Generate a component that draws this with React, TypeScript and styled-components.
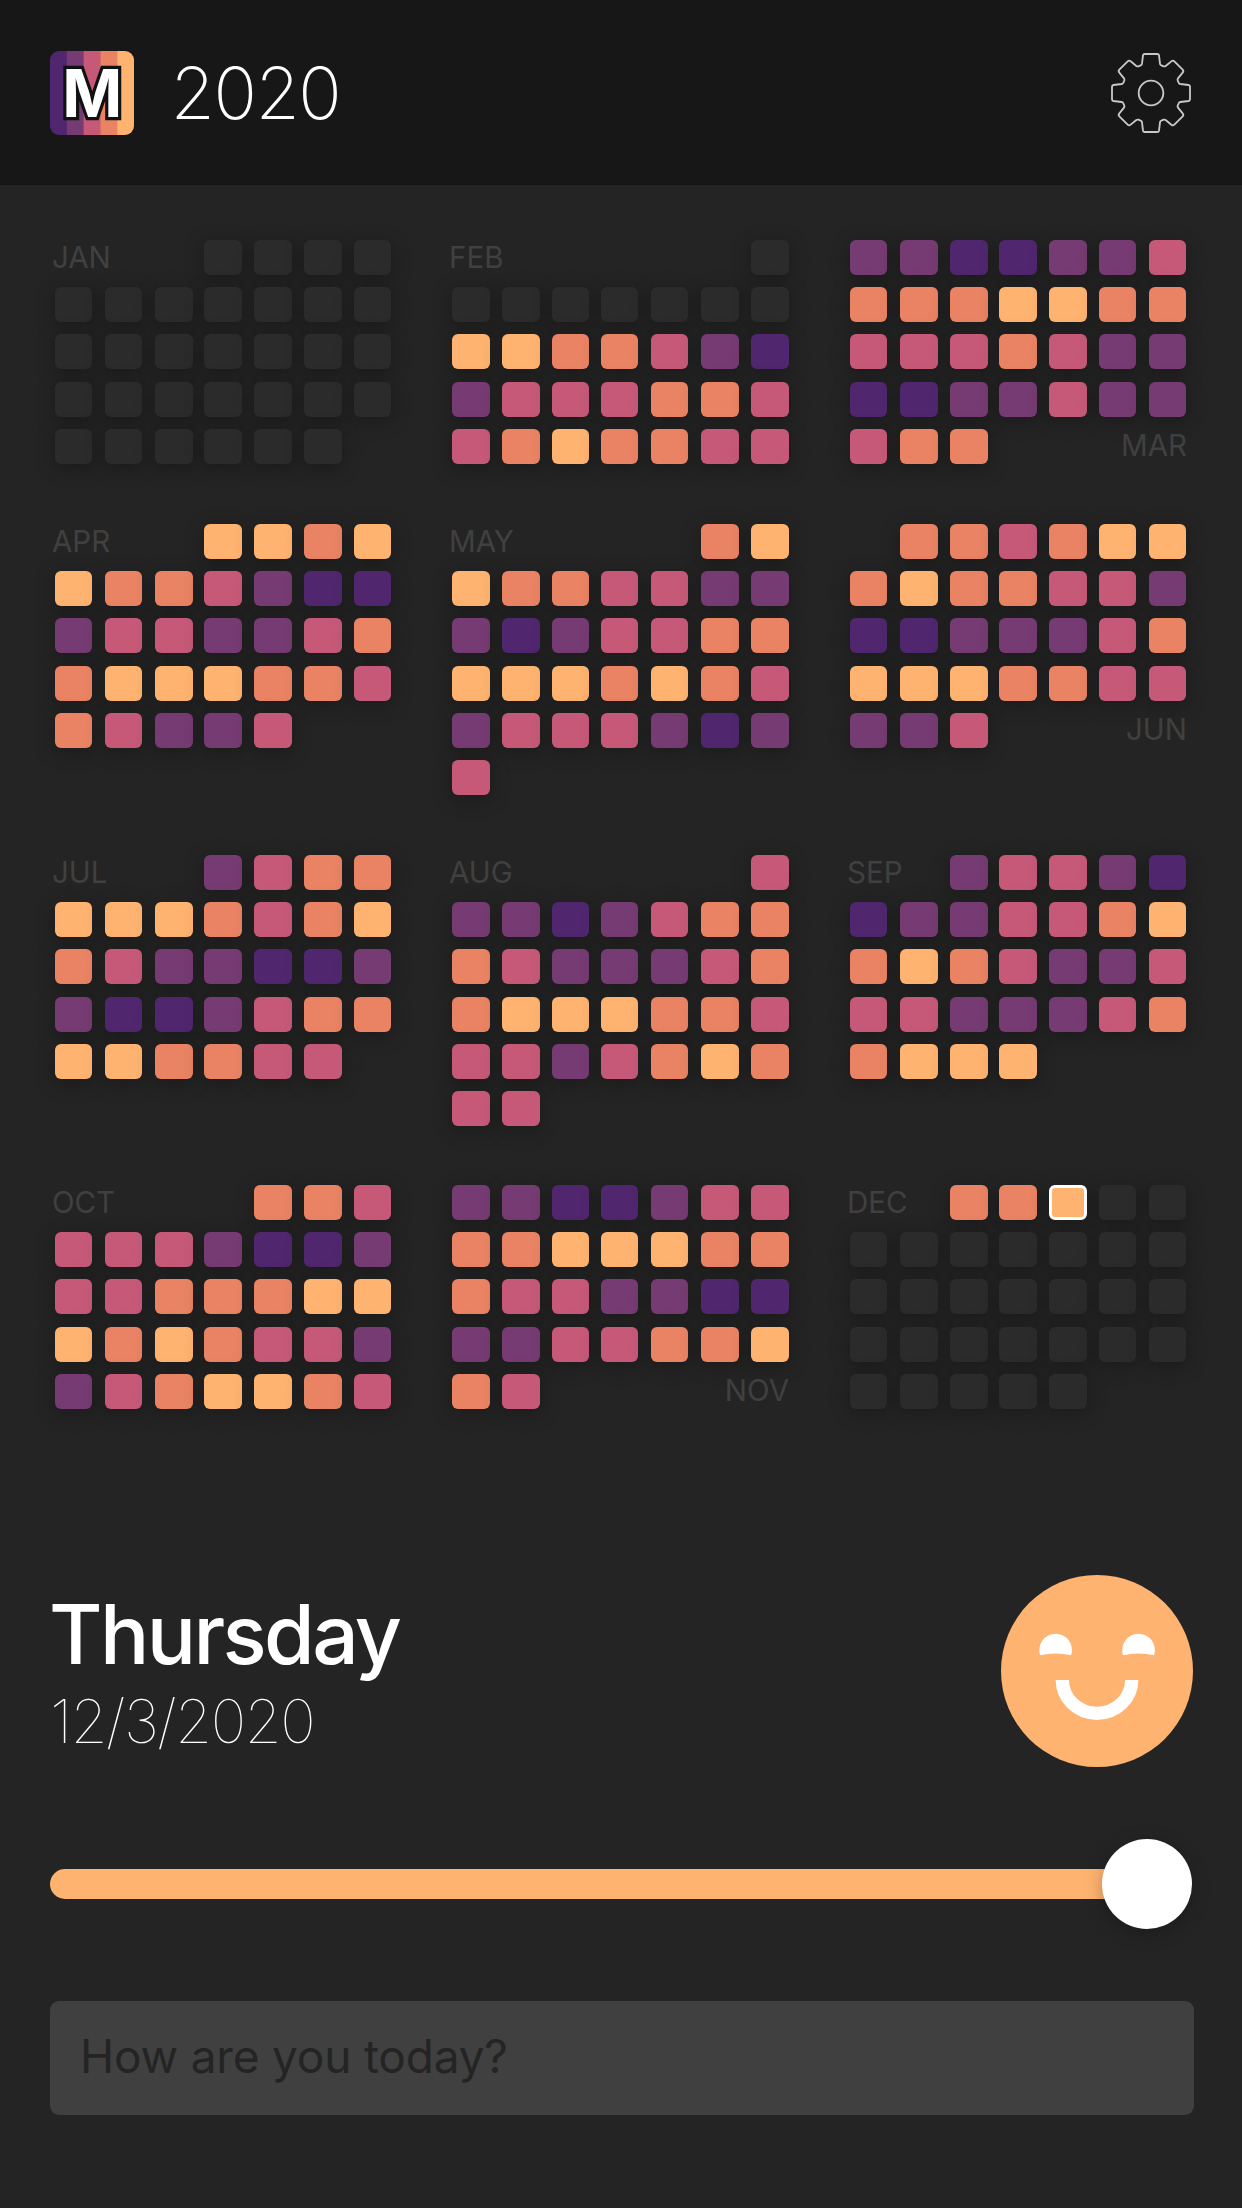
import React, { useState } from 'react';
import styled, { createGlobalStyle } from 'styled-components';

const MOODS = ['#50276f', '#763b72', '#c65978', '#e98363', '#ffb370'];
const EMPTY = '#2b2b2b';
const FONT = `Inter, "Liberation Sans", sans-serif`;

const GlobalStyle = createGlobalStyle`
  * { box-sizing: border-box; }
  body { margin: 0; background: #242424; font-family: ${FONT}; color: #fff; }
`;

const Page = styled.div`
  width: 1242px;
  height: 2208px;
  overflow: hidden;
  background: #242424;
  display: flex;
  flex-direction: column;
`;

const Header = styled.header`
  height: 185px;
  flex: none;
  background: #171717;
  padding: 0 50px;
  display: flex;
  align-items: center;
`;

const Logo = styled.svg`
  width: 84px;
  height: 84px;
  border-radius: 9px;
  flex: none;
`;

const LogoLetter = styled.text`
  font-family: ${FONT};
  font-weight: 700;
  font-size: 65.5px;
  fill: #fff;
  stroke: #111;
  stroke-width: 6.5px;
  paint-order: stroke;
  text-anchor: middle;
`;

const Year = styled.h1`
  margin: 0 auto 0 36.5px;
  font-size: 72px;
  font-weight: 200;
  line-height: 84px;
  letter-spacing: -1.5px;
`;

const SettingsButton = styled.button`
  border: 0;
  padding: 0;
  margin-right: 0;
  background: none;
  width: 82px;
  height: 82px;
  svg { display: block; width: 82px; height: 82px; }
`;

const Calendar = styled.main`
  flex: none;
  height: 1285px;
  padding: 55px 0 0 55px;
  display: grid;
  grid-template-columns: 397px 398px 337px;
  grid-template-rows: 284px 331px 330px 236px;
`;

const MonthGrid = styled.section`
  display: grid;
  align-content: start;
  grid-template-columns: 50px 50px 49px 50px 50px 50px 38px;
  grid-template-rows: 47px 47px 48px 47px 47px 35px;
`;

const Day = styled.div<{ $color: string; $width: number; $start?: number; $selected?: boolean }>`
  width: ${p => p.$width}px;
  height: 35px;
  border-radius: 6px;
  background: ${p => p.$color};
  ${p => p.$start && `grid-column-start: ${p.$start};`}
  ${p => p.$selected && 'border: 3px solid #fff;'}
  box-shadow: 0 4px 20px rgba(0, 0, 0, 0.3);
`;

const MonthName = styled.h2<{ $end?: boolean }>`
  margin: ${p => (p.$end ? '-1px 0 0 0' : '0 0 0 -3px')};
  grid-column: ${p => (p.$end ? '5 / 8' : '1 / 3')};
  grid-row: ${p => (p.$end ? 5 : 1)};
  text-align: ${p => (p.$end ? 'right' : 'left')};
  font-size: 29.5px;
  font-weight: 400;
  line-height: 35px;
  letter-spacing: 0;
  color: #404040;
  white-space: nowrap;
`;

const Entry = styled.section`
  flex: none;
  padding: 105px 49px 0 50px;
  display: flex;
  justify-content: space-between;
  align-items: flex-start;
`;

const DateBlock = styled.div`
  padding-top: 10px;
`;

const Weekday = styled.h2`
  margin: 0 0 0 -1px;
  font-size: 82px;
  line-height: 100px;
  font-weight: 550;
  letter-spacing: -2.6px;
`;

const FullDate = styled.p`
  margin: 0;
  font-size: 60px;
  line-height: 72px;
  font-weight: 100;
  letter-spacing: -1.6px;
`;

const Face = styled.svg`
  width: 192px;
  height: 192px;
  flex: none;
`;

const Slider = styled.div`
  margin: 72px 50px 0 50px;
  height: 90px;
  flex: none;
  display: flex;
  align-items: center;
`;

const Track = styled.div`
  flex: 1;
  height: 30px;
  border-radius: 15px 0 0 15px;
  background: ${MOODS[4]};
  margin-right: -45px;
`;

const Knob = styled.div`
  width: 90px;
  height: 90px;
  border-radius: 50%;
  background: #fff;
  box-shadow: 0 4px 18px rgba(0, 0, 0, 0.25);
  position: relative;
`;

const NoteInput = styled.input`
  margin: 72px 48px 0 50px;
  height: 114px;
  flex: none;
  border: 0;
  border-radius: 9px;
  padding: 0 30px 5px;
  background: #404040;
  color: #fff;
  font-family: ${FONT};
  font-size: 46px;
  letter-spacing: -0.2px;
  outline: none;
  &::placeholder { color: #242424; opacity: 1; }
`;

const COLUMN_WIDTHS = [
  [37, 37, 38, 38, 38, 38, 37],
  [38, 38, 37, 37, 37, 38, 38],
  [37, 38, 38, 38, 38, 37, 37],
];

type MonthData = { name: string; start: number; days: string; nameAtEnd?: boolean; selected?: number };

const MONTHS: MonthData[] = [
  { name: 'JAN', start: 4, days: '-'.repeat(31) },
  { name: 'FEB', start: 7, days: '-'.repeat(8) + '443321012223322343322' },
  { name: 'MAR', start: 1, days: '1100112333443322232110011211233', nameAtEnd: true },
  { name: 'APR', start: 4, days: '443443321001221123344433232112' },
  { name: 'MAY', start: 6, days: '3443322111012233444343212221012' },
  { name: 'JUN', start: 2, days: '332344343322100111234443322112', nameAtEnd: true },
  { name: 'JUL', start: 4, days: '1233444323432110011001233443322' },
  { name: 'AUG', start: 7, days: '2110123332111233444332221234322' },
  { name: 'SEP', start: 3, days: '122100112234343211222111233444' },
  { name: 'OCT', start: 5, days: '3322221001223334443432211234432' },
  { name: 'NOV', start: 1, days: '110012233444333221100112233432', nameAtEnd: true },
  { name: 'DEC', start: 3, days: '334' + '-'.repeat(28), selected: 2 },
];

function Month({ month, widths }: { month: MonthData; widths: number[] }) {
  return (
    <MonthGrid>
      <MonthName $end={month.nameAtEnd}>{month.name}</MonthName>
      {month.days.split('').map((level, i) => (
        <Day
          key={i}
          $color={level === '-' ? EMPTY : MOODS[Number(level)]}
          $width={widths[(month.start - 1 + i) % 7]}
          $start={i === 0 ? month.start : undefined}
          $selected={month.selected === i}
        />
      ))}
    </MonthGrid>
  );
}

function LogoMark() {
  return (
    <Logo viewBox="0 0 84 84">
      {MOODS.map((c, i) => (
        <rect key={c} x={i * 16.8} y={0} width={17.3} height={84} fill={c} />
      ))}
      <LogoLetter x={42.3} y={66} textLength={60} lengthAdjust="spacingAndGlyphs">M</LogoLetter>
    </Logo>
  );
}

function Gear() {
  return (
    <svg viewBox="-123 -123 246 246" fill="none" stroke="#c8c8c8" strokeWidth={5.5} strokeLinejoin="round">
      <circle r={37} />
      <path d="M-19-117H19Q23-117 24-113L27-88Q28-84 31-83L38-80Q41-79 44-81L61-95Q66-99 70-95L95-70Q99-66 95-61L81-44Q79-41 80-38L83-31Q84-28 88-27L113-24Q117-23 117-19V19Q117 23 113 24L88 27Q84 28 83 31L80 38Q79 41 81 44L95 61Q99 66 95 70L70 95Q66 99 61 95L44 81Q41 79 38 80L31 83Q28 84 27 88L24 113Q23 117 19 117H-19Q-23 117-24 113L-27 88Q-28 84-31 83L-38 80Q-41 79-44 81L-61 95Q-66 99-70 95L-95 70Q-99 66-95 61L-81 44Q-79 41-80 38L-83 31Q-84 28-88 27L-113 24Q-117 23-117 19V-19Q-117-23-113-24L-88-27Q-84-28-83-31L-80-38Q-79-41-81-44L-95-61Q-99-66-95-70L-70-95Q-66-99-61-95L-44-81Q-41-79-38-80L-31-83Q-28-84-27-88L-24-113Q-23-117-19-117Z" />
    </svg>
  );
}

function MoodFace() {
  return (
    <Face viewBox="0 0 192 192">
      <circle cx={96} cy={96} r={96} fill={MOODS[4]} />
      <path d="M39.2 80.3A16.3 16.3 0 1 1 70.1 80.3Q54.7 76.7 39.2 80.3Z" fill="#fff" />
      <path d="M122.1 80.3A16.3 16.3 0 1 1 153 80.3Q137.6 76.7 122.1 80.3Z" fill="#fff" />
      <path d="M61.3 105A34.7 33.3 0 0 0 130.7 105" fill="none" stroke="#fff" strokeWidth={13.3} />
    </Face>
  );
}

export default function App() {
  const [note, setNote] = useState('');
  return (
    <Page>
      <GlobalStyle />
      <Header>
        <LogoMark />
        <Year>2020</Year>
        <SettingsButton aria-label="Settings">
          <Gear />
        </SettingsButton>
      </Header>
      <Calendar>
        {MONTHS.map((m, i) => (
          <Month key={m.name} month={m} widths={COLUMN_WIDTHS[i % 3]} />
        ))}
      </Calendar>
      <Entry>
        <DateBlock>
          <Weekday>Thursday</Weekday>
          <FullDate>12/3/2020</FullDate>
        </DateBlock>
        <MoodFace />
      </Entry>
      <Slider>
        <Track />
        <Knob />
      </Slider>
      <NoteInput placeholder="How are you today?" value={note} onChange={e => setNote(e.target.value)} />
    </Page>
  );
}
